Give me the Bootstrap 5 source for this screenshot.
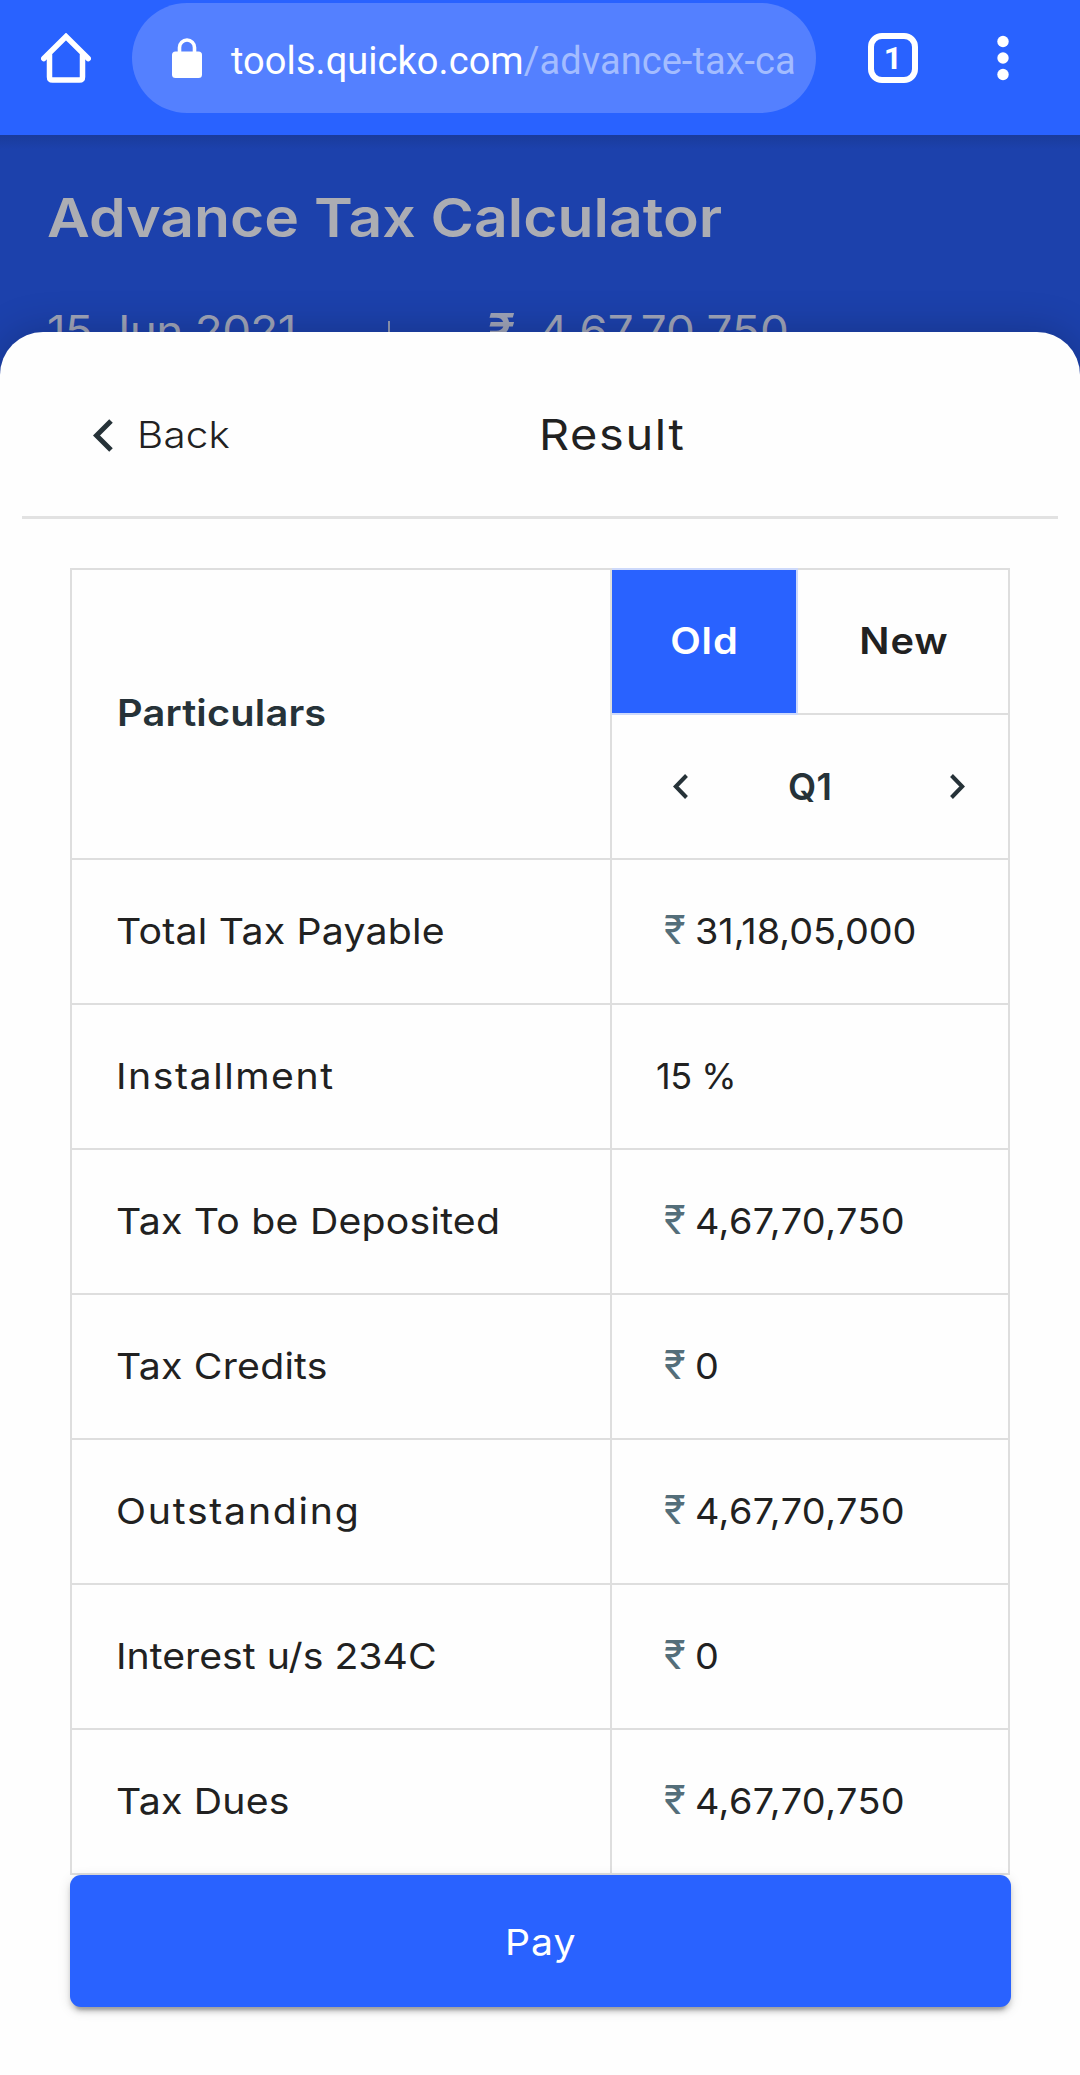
<!DOCTYPE html>
<html lang="en">
<head>
<meta charset="utf-8">
<meta name="viewport" content="width=device-width, initial-scale=1">
<title>Advance Tax Calculator</title>
<link rel="stylesheet" href="https://cdn.jsdelivr.net/npm/bootstrap@5.3.0/dist/css/bootstrap.min.css">
<style>
  :root { --brand: #2962ff; --ink: #212121; --slate: #263238; --rule: #dedede; }
  body { width: 1080px; height: 2075px; overflow: hidden; background: #1c41ac; font-family: Inter, "Liberation Sans", sans-serif; color: var(--ink); }
  svg { display: block; flex: none; }

  /* geometric, wide letterforms */
  .wide { display: inline-block; transform: scaleX(1.09); transform-origin: 0 50%; }
  .wide-num { display: inline-block; transform: scaleX(1.05); transform-origin: 0 50%; letter-spacing: .4px; }
  .mid { transform-origin: 50% 50%; }

  /* browser bar */
  .browser-bar { height: 135px; background: var(--brand); padding: 3px 71px 0 41px; }
  .bar-row { height: 110px; }
  .url-pill { width: 684px; height: 110px; margin-left: 41px; padding-left: 40px; border-radius: 55px; background: #5480ff; }
  .url-text { font: 400 38px/1 Roboto, sans-serif; letter-spacing: .06px; margin-left: 29px; padding-top: 5px; white-space: nowrap; }
  .url-path { color: #a3bcff; }
  .tab-count { width: 50px; height: 50px; margin-left: 52px; border: 6px solid #fff; border-radius: 14px; font: 700 32px/1 Roboto, sans-serif; }

  /* dimmed page header */
  .app-header { height: 197px; padding: 51px 0 0 47px; color: #acadb3; background: linear-gradient(#1a3b9b, #1c41ac 14px); }
  .app-title { font-size: 54px; line-height: 64px; font-weight: 600; }
  .due-line { margin-top: 56px; font-size: 42px; line-height: 50px; color: #9fa4b8; white-space: nowrap; }
  .due-date { width: 341px; }
  .due-date .wide { letter-spacing: -.6px; }
  .due-amount { letter-spacing: .1px; }
  .due-sep { width: 2px; height: 36px; margin-top: 15px; background: #8f98b5; }
  .due-rupee { width: 51px; margin-left: 98px; font-size: 50px; font-weight: 500; }

  /* bottom sheet */
  .sheet { height: 1743px; background: #fefefe; border-radius: 43px 43px 0 0; box-shadow: 0 0 40px rgba(0, 0, 0, .22); }
  .sheet-head { height: 187px; margin: 0 22px; padding: 22px 0 0 71px; border-bottom: 3px solid #e2e2e2; }
  .back-link { width: 446px; font-size: 37px; font-weight: 300; color: var(--ink); letter-spacing: .2px; }
  .sheet-title { font-size: 43px; font-weight: 400; letter-spacing: 1.5px; padding-bottom: 2px; }

  .result-table { width: 940px; margin: 49px 0 0 70px; table-layout: fixed; border-collapse: collapse; font-size: 36px; font-weight: 400; line-height: 44px; white-space: nowrap; }
  .col-name { width: 540px; } .col-old { width: 186px; } .col-new { width: 212px; }
  .result-table td, .result-table th { height: 145px; padding: 0 0 2px 45px; border: 2px solid var(--rule); vertical-align: middle; }
  .result-table td { padding-left: 44px; }
  .result-table th { font-size: 36.5px; font-weight: 600; letter-spacing: .15px; }
  .result-table th.regime { padding: 0 0 2px 1px; text-align: center; letter-spacing: .8px; }
  .result-table th.regime-on { padding-left: 0; background: var(--brand); color: #fff; border-color: #cdd9fb; }
  .result-table th.quarter { padding: 0 43px 0 61px; }
  .quarter-name { margin-right: 18px; }
  .slate { color: var(--slate); }
  .rupee { display: inline-block; width: 31px; margin-left: 8px; font-size: 40px; font-weight: 400; color: #546e7a; }

  .t-0 { letter-spacing: 0; } .t-05 { letter-spacing: .2px; } .t-15 { letter-spacing: 1.4px; } .t-2 { letter-spacing: 1.6px; } .t-neg { letter-spacing: -.5px; }

  .pay-btn { width: 941px; height: 132px; margin-left: 70px; padding-top: 8px; border: 0; border-radius: 11px; background: var(--brand); color: #fff; font-size: 36px; font-weight: 400; letter-spacing: .9px;
    box-shadow: 0 8px 3px -5px rgba(0,0,0,.2), 0 5px 5px rgba(0,0,0,.14), 0 3px 13px rgba(0,0,0,.12); }
</style>
<script src="https://cdn.jsdelivr.net/npm/bootstrap@5.3.0/dist/js/bootstrap.bundle.min.js"></script>
</head>
<body>
<nav class="browser-bar text-white">
  <div class="bar-row d-flex align-items-center">
    <svg width="50" height="50" viewBox="0 0 50 50" fill="none" stroke="#fff" stroke-width="5.500" stroke-linecap="round"><path d="M2.800 25.500 25 3.500 47.200 25.500"/><path d="M8.500 22V44q0 3 3 3H38.500q3 0 3-3V22"/></svg>
    <div class="url-pill d-flex align-items-center">
      <svg width="30" height="40" viewBox="0 0 30 40"><rect y="13.500" width="30" height="26.500" rx="3.500" fill="#fff"/><path d="M7.500 15V9.500a7.500 7.500 0 0 1 15 0V15" fill="none" stroke="#fff" stroke-width="3.600"/></svg>
      <div class="url-text">tools.quicko.com<span class="url-path">/advance-tax-ca</span></div>
    </div>
    <div class="tab-count d-flex align-items-center justify-content-center">1</div>
    <svg class="ms-auto" width="12" height="46" viewBox="0 0 12 46" fill="#fff"><circle cx="6" cy="6.500" r="5.700"/><circle cx="6" cy="23" r="5.700"/><circle cx="6" cy="39.500" r="5.700"/></svg>
  </div>
</nav>

<header class="app-header">
  <div class="app-title"><span class="wide">Advance Tax Calculator</span></div>
  <div class="due-line d-flex">
    <span class="due-date"><span class="wide">15 Jun 2021</span></span>
    <span class="due-sep"></span>
    <span class="due-rupee">₹</span>
    <span class="due-amount wide">4,67,70,750</span>
  </div>
</header>

<main class="sheet position-relative">
  <div class="sheet-head d-flex align-items-center">
    <a class="back-link d-flex align-items-center text-decoration-none" href="#">
      <svg class="me-4" width="20" height="33" viewBox="0 0 20 33" fill="none" stroke="#263238" stroke-width="5"><path d="M18 2 3.500 16.500 18 31"/></svg>
      <span class="wide">Back</span>
    </a>
    <div class="sheet-title"><span class="wide">Result</span></div>
  </div>

  <table class="result-table">
    <colgroup><col class="col-name"><col class="col-old"><col class="col-new"></colgroup>
    <tbody>
      <tr><th rowspan="2" class="slate"><span class="wide">Particulars</span></th><th class="regime regime-on"><span class="wide mid">Old</span></th><th class="regime"><span class="wide mid">New</span></th></tr>
      <tr><th colspan="2" class="quarter slate">
        <div class="d-flex align-items-center justify-content-between">
          <svg width="15" height="25" viewBox="0 0 15 25" fill="none" stroke="#263238" stroke-width="4"><path d="M13.500 1.500 2.800 12.500 13.500 23.500"/></svg>
          <span class="quarter-name">Q1</span>
          <svg width="15" height="25" viewBox="0 0 15 25" fill="none" stroke="#263238" stroke-width="4"><path d="M1.500 1.500 12.200 12.500 1.500 23.500"/></svg>
        </div></th></tr>
      <tr><td class="t-05"><span class="wide">Total Tax Payable</span></td><td colspan="2"><span class="rupee">₹</span><span class="wide-num t-0">31,18,05,000</span></td></tr>
      <tr><td class="t-15"><span class="wide">Installment</span></td><td colspan="2" class="t-neg">15 %</td></tr>
      <tr><td class="t-05"><span class="wide">Tax To be Deposited</span></td><td colspan="2"><span class="rupee">₹</span><span class="wide-num">4,67,70,750</span></td></tr>
      <tr><td class="t-05"><span class="wide">Tax Credits</span></td><td colspan="2"><span class="rupee">₹</span><span class="wide-num">0</span></td></tr>
      <tr><td class="t-2"><span class="wide">Outstanding</span></td><td colspan="2"><span class="rupee">₹</span><span class="wide-num">4,67,70,750</span></td></tr>
      <tr><td><span class="wide">Interest u/s 234C</span></td><td colspan="2"><span class="rupee">₹</span><span class="wide-num">0</span></td></tr>
      <tr><td class="t-05"><span class="wide">Tax Dues</span></td><td colspan="2"><span class="rupee">₹</span><span class="wide-num">4,67,70,750</span></td></tr>
    </tbody>
  </table>
  <button type="button" class="pay-btn btn d-block"><span class="wide mid">Pay</span></button>
</main>
</body>
</html>
